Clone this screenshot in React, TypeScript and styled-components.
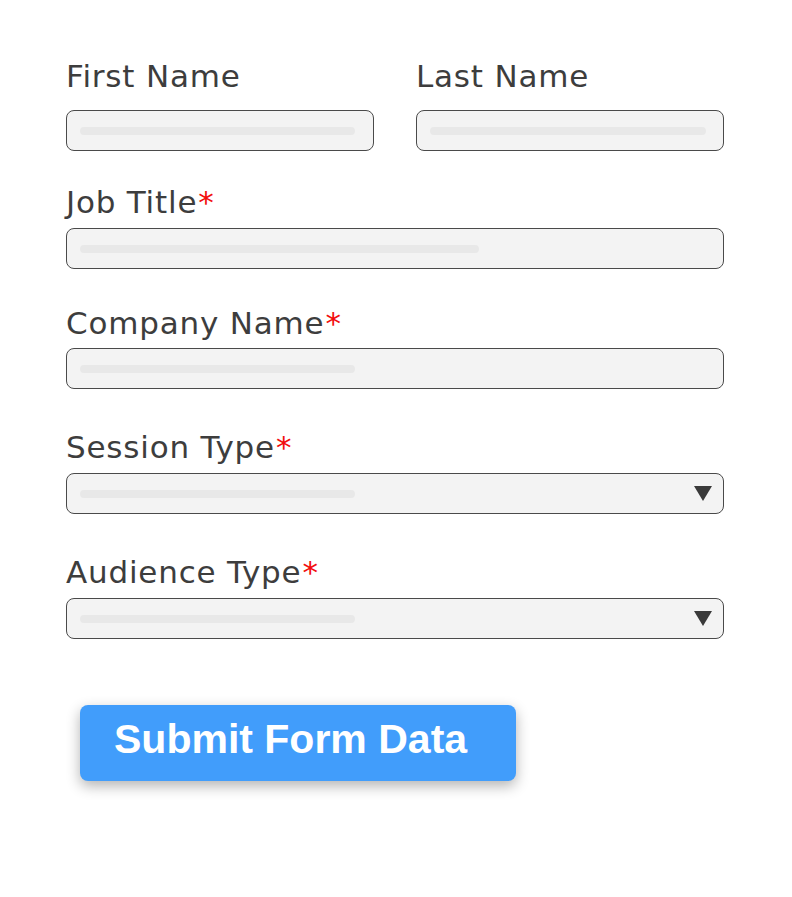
import styled, { createGlobalStyle } from "styled-components";

const GlobalStyle = createGlobalStyle`
  body {
    margin: 0;
    background: #ffffff;
  }
`;

const Form = styled.form`
  width: 658px;
  padding: 58px 0 40px 66px;
`;

const Row = styled.div`
  display: grid;
  grid-template-columns: 308px 308px;
  column-gap: 42px;
`;

const Field = styled.div<{ $top?: number }>`
  display: flex;
  flex-direction: column;
  margin-top: ${(props) => props.$top || 0}px;
`;

const Label = styled.label<{ $gap?: number }>`
  font-family: "DejaVu Sans", sans-serif;
  font-size: 31px;
  line-height: 36px;
  letter-spacing: 0.8px;
  color: #3d3d3d;
  margin-bottom: ${(props) => props.$gap ?? 8}px;
`;

const Required = styled.span`
  color: #f20d0d;
  margin-left: 1px;
`;

const Input = styled.div`
  box-sizing: border-box;
  height: 41px;
  border: 1px solid #4a4a4a;
  border-radius: 8px;
  background: #f3f3f3;
  display: flex;
  align-items: center;
  justify-content: space-between;
  padding: 0 11px 0 13px;
`;

const Placeholder = styled.div<{ $width: number }>`
  width: ${(props) => props.$width}px;
  height: 8px;
  border-radius: 4px;
  background: #e8e8e8;
`;

const Arrow = styled.svg`
  display: block;
  width: 18px;
  height: 15px;
`;

const Button = styled.button`
  box-sizing: border-box;
  margin: 66px 0 0 14px;
  width: 436px;
  height: 76px;
  border: none;
  border-radius: 8px;
  background: #419dfb;
  box-shadow: 0 5px 14px rgba(0, 0, 0, 0.3);
  color: #ffffff;
  font-family: "Liberation Sans", Arial, sans-serif;
  font-weight: bold;
  font-size: 41px;
  line-height: 41px;
  text-align: left;
  padding: 0 0 8px 34px;
  display: block;
`;

function SelectArrow() {
  return (
    <Arrow viewBox="0 0 18 15">
      <polygon points="0,0 18,0 9,15" fill="#3a3a3a" />
    </Arrow>
  );
}

function App() {
  return (
    <>
      <GlobalStyle />
      <Form onSubmit={(e) => e.preventDefault()}>
        <Row>
          <Field>
            <Label $gap={16}>First Name</Label>
            <Input>
              <Placeholder $width={275} />
            </Input>
          </Field>
          <Field>
            <Label $gap={16}>Last Name</Label>
            <Input>
              <Placeholder $width={276} />
            </Input>
          </Field>
        </Row>
        <Field $top={33}>
          <Label>
            Job Title<Required>*</Required>
          </Label>
          <Input>
            <Placeholder $width={399} />
          </Input>
        </Field>
        <Field $top={36}>
          <Label $gap={7}>
            Company Name<Required>*</Required>
          </Label>
          <Input>
            <Placeholder $width={275} />
          </Input>
        </Field>
        <Field $top={40}>
          <Label>
            Session Type<Required>*</Required>
          </Label>
          <Input>
            <Placeholder $width={275} />
            <SelectArrow />
          </Input>
        </Field>
        <Field $top={40}>
          <Label>
            Audience Type<Required>*</Required>
          </Label>
          <Input>
            <Placeholder $width={275} />
            <SelectArrow />
          </Input>
        </Field>
        <Button type="submit">Submit Form Data</Button>
      </Form>
    </>
  );
}

export default App;
